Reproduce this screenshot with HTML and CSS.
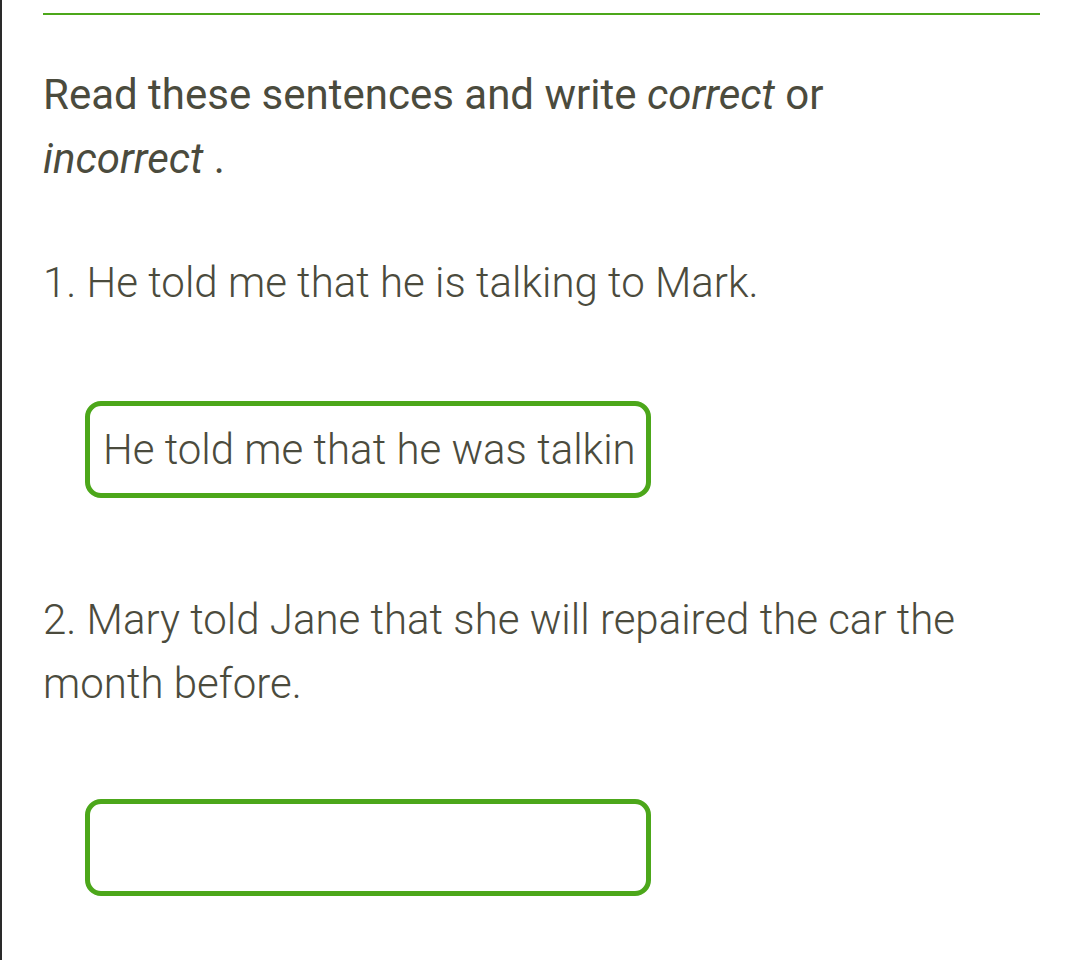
FILE: index.html
```html
<!DOCTYPE html>
<html lang="en">
<head>
  <meta charset="UTF-8" />
  <meta name="viewport" content="width=device-width, initial-scale=1.0">
  <title>Reported speech</title>
  <link rel="stylesheet" href="styles.css">
</head>
<body>
  <div class="page">
    <hr class="divider">
    <p class="task">Read these sentences and write <em>correct</em> or <em>incorrect</em> .</p>

    <div class="question">
      <p class="sentence">1. He told me that he is talking to Mark.</p>
      <input class="answer" type="text" value="He told me that he was talking to Mark.">
    </div>

    <div class="question">
      <p class="sentence">2. Mary told Jane that she will repaired the car the month before.</p>
      <input class="answer" type="text" value="">
    </div>
  </div>
</body>
</html>
```

FILE: styles.css
```css
:root {
  --green: #4ca71a;
  --text-color: #4b4b3d;
}

* {
  box-sizing: border-box;
  margin: 0;
  padding: 0;
}

body {
  font-family: Roboto, 'Liberation Sans', sans-serif;
  color: var(--text-color);
  background: #fff;
}

.page {
  min-height: 960px;
  border-left: 2px solid #2a2a2a;
  padding: 13px 40px 0 41px;
}

.divider {
  border: none;
  border-top: 2px solid var(--green);
}

.task {
  margin-top: 48px;
  font-size: 42px;
  line-height: 64px;
  font-weight: 400;
  max-width: 800px;
}

.task em {
  font-style: italic;
}

.question {
  margin-top: 60px;
}

.sentence {
  font-size: 42px;
  line-height: 64px;
  font-weight: 300;
  max-width: 960px;
}

.answer {
  display: block;
  width: 566px;
  height: 97px;
  margin: 86px 0 0 42px;
  padding: 0 11px 0 13px;
  border: 5px solid var(--green);
  border-radius: 16px;
  font-family: Roboto, 'Liberation Sans', sans-serif;
  font-size: 42px;
  font-weight: 300;
  color: var(--text-color);
  background: #fff;
  outline: none;
}

.question + .question {
  margin-top: 90px;
}

.question + .question .answer {
  margin-top: 83px;
}
```
